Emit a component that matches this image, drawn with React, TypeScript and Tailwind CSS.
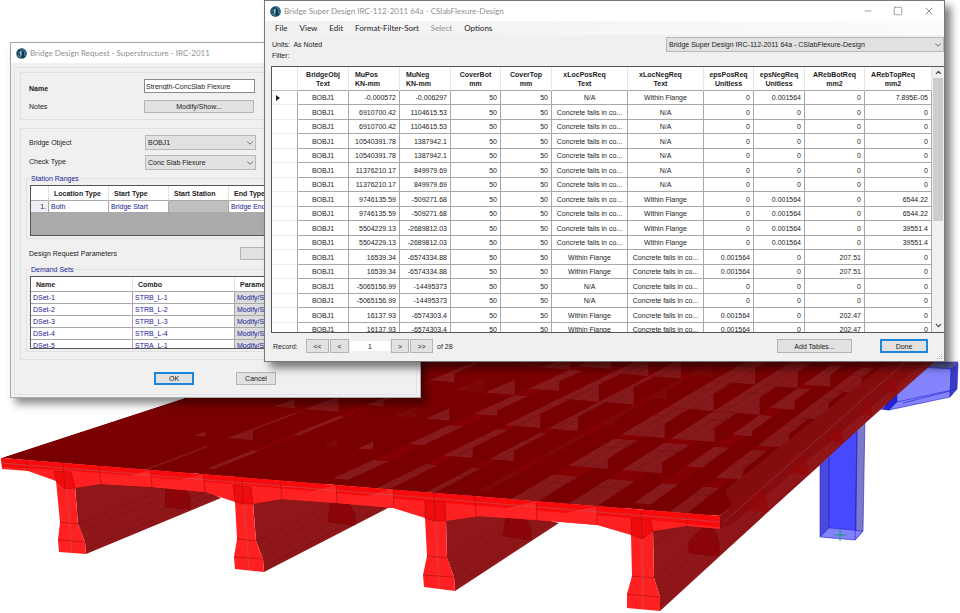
import type { ReactNode } from "react"
import { ChevronDown, ChevronUp, Minus, Square, X } from "lucide-react"

/** Results table */
type Row = [string, string, string, string, string, string, string, string, string, string, string]

const FAILS = "Concrete fails in co..."
const FLANGE = "Within Flange"

const rows: Row[] = [
  ["BOBJ1", "-0.000572", "-0.006297", "50", "50", "N/A", FLANGE, "0", "0.001564", "0", "7.895E-05"],
  ["BOBJ1", "6910700.42", "1104615.53", "50", "50", FAILS, "N/A", "0", "0", "0", "0"],
  ["BOBJ1", "6910700.42", "1104615.53", "50", "50", FAILS, "N/A", "0", "0", "0", "0"],
  ["BOBJ1", "10540391.78", "1387942.1", "50", "50", FAILS, "N/A", "0", "0", "0", "0"],
  ["BOBJ1", "10540391.78", "1387942.1", "50", "50", FAILS, "N/A", "0", "0", "0", "0"],
  ["BOBJ1", "11376210.17", "849979.69", "50", "50", FAILS, "N/A", "0", "0", "0", "0"],
  ["BOBJ1", "11376210.17", "849979.69", "50", "50", FAILS, "N/A", "0", "0", "0", "0"],
  ["BOBJ1", "9746135.59", "-509271.68", "50", "50", FAILS, FLANGE, "0", "0.001564", "0", "6544.22"],
  ["BOBJ1", "9746135.59", "-509271.68", "50", "50", FAILS, FLANGE, "0", "0.001564", "0", "6544.22"],
  ["BOBJ1", "5504229.13", "-2689812.03", "50", "50", FAILS, FLANGE, "0", "0.001564", "0", "39551.4"],
  ["BOBJ1", "5504229.13", "-2689812.03", "50", "50", FAILS, FLANGE, "0", "0.001564", "0", "39551.4"],
  ["BOBJ1", "16539.34", "-6574334.88", "50", "50", FLANGE, FAILS, "0.001564", "0", "207.51", "0"],
  ["BOBJ1", "16539.34", "-6574334.88", "50", "50", FLANGE, FAILS, "0.001564", "0", "207.51", "0"],
  ["BOBJ1", "-5065156.99", "-14495373", "50", "50", "N/A", FAILS, "0", "0", "0", "0"],
  ["BOBJ1", "-5065156.99", "-14495373", "50", "50", "N/A", FAILS, "0", "0", "0", "0"],
  ["BOBJ1", "16137.93", "-6574303.4", "50", "50", FLANGE, FAILS, "0.001564", "0", "202.47", "0"],
  ["BOBJ1", "16137.93", "-6574303.4", "50", "50", FLANGE, FAILS, "0.001564", "0", "202.47", "0"],
]

const columns = [
  { name: "BridgeObj", unit: "Text", col: "w-[51px]", head: "text-center", cell: "text-center" },
  { name: "MuPos", unit: "KN-mm", col: "w-[51px]", head: "pl-[6px] text-left", cell: "pr-[3px] text-right" },
  { name: "MuNeg", unit: "KN-mm", col: "w-[51px]", head: "pl-[6px] text-left", cell: "pr-[3px] text-right" },
  { name: "CoverBot", unit: "mm", col: "w-[50px]", head: "text-center", cell: "pr-[3px] text-right" },
  { name: "CoverTop", unit: "mm", col: "w-[51px]", head: "text-center", cell: "pr-[3px] text-right" },
  { name: "xLocPosReq", unit: "Text", col: "w-[76px]", head: "pr-[10px] text-center", cell: "text-center" },
  { name: "xLocNegReq", unit: "Text", col: "w-[76px]", head: "pr-[10px] text-center", cell: "text-center" },
  { name: "epsPosReq", unit: "Unitless", col: "w-[50px]", head: "text-center", cell: "pr-[3px] text-right" },
  { name: "epsNegReq", unit: "Unitless", col: "w-[51px]", head: "text-center", cell: "pr-[3px] text-right" },
  { name: "ARebBotReq", unit: "mm2", col: "w-[60px]", head: "text-center", cell: "pr-[3px] text-right" },
  { name: "ARebTopReq", unit: "mm2", col: "w-[67px]", head: "pr-[10px] text-center", cell: "pr-[3px] text-right" },
]

const demandSets = [
  ["DSet-1", "STRB_L-1"],
  ["DSet-2", "STRB_L-2"],
  ["DSet-3", "STRB_L-3"],
  ["DSet-4", "STRB_L-4"],
  ["DSet-5", "STRA_L-1"],
]

const menus = ["File", "View", "Edit", "Format-Filter-Sort", "Select", "Options"]

/** Bridge model, drawn towards a single vanishing point */
type Pt = [number, number]

const VP: Pt = [1305, 33]

// u runs along the front edge of the deck, t goes back to the vanishing point
function deck(u: number, t: number, drop = 0): Pt {
  const x = 1 + 719 * u
  const y = 458 + 58 * u
  return [x + (VP[0] - x) * t, y + (VP[1] - y) * t + drop * (1 - t)]
}

function toVP([x, y]: Pt, t: number): Pt {
  return [x + (VP[0] - x) * t, y + (VP[1] - y) * t]
}

const pts = (list: Pt[]) => list.map(([x, y]) => `${x.toFixed(1)},${y.toFixed(1)}`).join(" ")

const FAR = 0.335
const rowsT = [0, 0.091, 0.165, 0.229, 0.283, 0.33]
const webs = [0.028, 0.079, 0.131, 0.204, 0.279, 0.334, 0.388, 0.468, 0.54, 0.603, 0.663, 0.747, 0.83, 0.893, 0.954]
const DROP = 22

const frontFace: Pt[] = [
  [1, 458], [720, 516], [720, 529], [687, 526], [653, 531], [654, 578], [660, 597], [660, 611], [627, 608], [627, 594],
  [632, 576], [631, 535], [597, 525], [537, 520], [480, 516], [446, 521], [447, 558], [454, 577], [455, 591], [424, 587],
  [423, 575], [427, 556], [425, 518], [393, 508], [337, 503], [282, 499], [253, 504], [256, 541], [263, 559], [264, 572],
  [235, 569], [234, 557], [237, 539], [235, 502], [205, 492], [152, 487], [101, 484], [75, 488], [78, 524], [85, 542],
  [86, 554], [59, 552], [58, 540], [60, 522], [56, 481], [28, 471], [2, 469],
]

const girderSides: Pt[][] = [
  [[75, 486], [101, 482], [205, 490], [221, 498], [86, 554], [85, 542], [78, 524]],
  [[253, 502], [282, 497], [393, 506], [388, 508], [264, 572], [263, 559], [256, 541]],
  [[446, 519], [480, 514], [537, 518], [559, 523], [455, 591], [454, 577], [447, 558]],
  [[653, 529], [687, 524], [720, 516], [905, 362], [934, 362], [863, 425], [820, 465], [768, 512], [720, 556], [660, 611], [660, 597], [654, 578]],
]

// flange corners of each girder end, the long edges start here
const girderEdges: { from: Pt; reach: number }[] = [
  { from: [78, 524], reach: 0.13 }, { from: [81, 531], reach: 0.12 }, { from: [85, 542], reach: 0.11 }, { from: [86, 549], reach: 0.11 },
  { from: [256, 541], reach: 0.14 }, { from: [259, 549], reach: 0.13 }, { from: [263, 559], reach: 0.12 }, { from: [264, 567], reach: 0.12 },
  { from: [447, 558], reach: 0.14 }, { from: [450, 566], reach: 0.13 }, { from: [454, 577], reach: 0.12 }, { from: [455, 585], reach: 0.12 },
  { from: [653, 545], reach: 0.42 }, { from: [654, 578], reach: 0.42 }, { from: [657, 587], reach: 0.42 }, { from: [660, 597], reach: 0.42 }, { from: [660, 605], reach: 0.42 },
]

const diaphragmEnds: Pt[][] = [
  [[166, 486], [186, 489], [190, 498], [190, 509], [165, 507]],
  [[331, 503], [350, 505], [355, 514], [355, 525], [328, 522]],
  [[506, 518], [527, 520], [531, 530], [531, 540], [503, 536]],
  [[702, 528], [714, 529], [719, 542], [719, 556], [689, 553], [689, 541]],
]

const farDiaphragmEnds: Pt[][] = [
  [[763, 488], [768, 502], [768, 512], [742, 510], [752, 498]],
  [[803, 456], [808, 466], [808, 475], [788, 473], [796, 463]],
  [[838, 425], [843, 434], [843, 443], [826, 441], [833, 432]],
  [[868, 399], [872, 408], [872, 416], [858, 414], [863, 405]],
  [[893, 377], [897, 384], [897, 393], [884, 390], [889, 382]],
]

const joints: Pt[][] = [
  [[27, 460], [28, 471]], [[63, 463], [65, 489]], [[99, 466], [101, 484]], [[150, 470], [152, 487]], [[203, 474], [205, 492]],
  [[242, 477], [243, 504]], [[280, 480], [282, 499]], [[336, 485], [337, 503]], [[393, 489], [394, 508]], [[434, 493], [435, 521]],
  [[475, 496], [476, 516]], [[536, 501], [537, 520]], [[597, 506], [597, 525]], [[641, 510], [642, 539]], [[686, 513], [687, 526]],
]

const girderJoints: Pt[][] = [
  [[60, 522], [78, 524]], [[58, 540], [85, 542]], [[237, 539], [256, 541]], [[234, 557], [263, 559]],
  [[427, 556], [447, 558]], [[423, 575], [454, 577]], [[632, 576], [654, 578]], [[627, 594], [660, 597]],
]

function BridgeDeck() {
  const bays = rowsT.slice(1).map((t, i) => ({ t, prev: rowsT[i] }))
  return (
    <g>
      <clipPath id="deck-clip">
        <polygon points={pts([deck(0, 0), deck(1, 0), deck(1, FAR), deck(0, FAR)])} />
      </clipPath>
      <g clipPath="url(#deck-clip)">
        <polygon points={pts([deck(0, 0), deck(1, 0), deck(1, FAR), deck(0, FAR)])} fill="#7b0000" />
        {bays.map(({ t, prev }) => (
          <g key={t}>
            {/* bottom flanges seen through the deck, then the reinforcement on them */}
            {webs.slice(0, -1).map((u, i) => {
              const near = Math.max(prev, t - (i % 3 === 0 ? 0.04 : 0.056))
              const mid = t - 0.016
              return (
                <g key={u}>
                  <polygon fill={i % 5 === 4 ? "#7c0808" : "#86191b"}
                    points={pts([deck(u, t, DROP), deck(webs[i + 1], t, DROP), deck(webs[i + 1], near, DROP), deck(u, near, DROP)])} />
                  {i % 3 !== 0 && (
                    <g stroke="#5a0a0c" strokeWidth="0.4" opacity="0.7">
                      <polyline points={pts([deck(u, mid, DROP), deck(webs[i + 1], mid, DROP)])} />
                      <polyline points={pts([deck(u + 0.02, t, DROP), deck(u + 0.02, near, DROP)])} />
                      <polyline points={pts([deck(u + 0.035, t, DROP), deck(u + 0.045, near, DROP)])} />
                    </g>
                  )}
                </g>
              )
            })}
            <polygon points={pts([deck(0.028, t), deck(0.954, t), deck(0.954, t, DROP), deck(0.028, t, DROP)])} fill="#840002" />
            {webs.map((u) => (
              <polygon key={u} fill="#790000"
                points={pts([deck(u, prev), deck(u, t), deck(u, t, DROP), deck(u, prev, DROP)])} />
            ))}
            <polyline points={pts([deck(0.028, t), deck(0.954, t)])} stroke="#8c0406" strokeWidth="0.5" opacity="0.7" />
            <polyline points={pts([deck(0.45, t, 5), deck(0.954, t, 5)])} stroke="#5c0000" strokeWidth="0.4" opacity="0.5" />
          </g>
        ))}
        {/* right cantilever */}
        <polygon points={pts([deck(0.965, 0.05), deck(1, 0.02), deck(1, FAR), deck(0.965, FAR)])} fill="#830c0d" />
        {[0.6, 0.68, 0.76, 0.85, 0.9].map((u) => (
          <polyline key={u} points={pts([deck(u, 0), deck(u, FAR)])} stroke="#500000" strokeWidth="0.4" opacity="0.4" />
        ))}
      </g>
    </g>
  )
}

function BridgePier() {
  return (
    <g stroke="#2424cc" strokeWidth="0.6" strokeLinejoin="round">
      <polygon points="820,465 829,457 829,528 820,537" fill="#4a4adf" />
      <polygon points="829,457 857,425 856,530 829,528" fill="#4848ff" />
      <polygon points="857,425 865,415 863,531 855,540 856,530" fill="#7a7ac8" />
      <polygon points="820,537 829,528 863,531 855,540" fill="#8282ff" />
      <path d="M857 432 855 540" fill="none" />
      <path d="M834 535h12M840 529v12" stroke="#189a78" strokeWidth="1" />
      <polygon points="925,367 932,362 958,362 951,369" fill="#5c5c9c" />
      <polygon points="920,367 951,369 950,397 889,410 880,409 890,390" fill="#8484ff" />
      <polygon points="951,369 958,363 957,389 950,397" fill="#3b3bc2" />
      <polygon points="888,402 897,394 897,402 889,410 883,409" fill="#2222d2" />
      <path d="M897 402 957 389M903 403 950 391" fill="none" />
    </g>
  )
}

function BridgeModel() {
  return (
    <svg viewBox="0 0 960 613" className="block h-auto w-full" fill="none" role="img" aria-label="3D bridge model">
      <BridgePier />
      {girderSides.map((side, i) => <polygon key={i} points={pts(side)} fill="#8f171a" />)}
      {girderEdges.map(({ from, reach }, i) => (
        <polyline key={i} points={pts([from, toVP(from, reach)])} stroke="#6a0b0d" strokeWidth="0.5" opacity="0.6" />
      ))}
      {diaphragmEnds.map((end, i) => (
        <polygon key={i} points={pts(end)} fill="#8c0206" stroke="#6a0005" strokeWidth="0.5" opacity="0.85" />
      ))}
      <BridgeDeck />
      <polygon points={pts([[720, 516], [720, 529], [732, 524], [925, 362], [900, 362]])} fill="#850d0f" />
      <path d="M724 522 905 362" stroke="#a86a6a" strokeWidth="0.6" opacity="0.6" />
      {farDiaphragmEnds.map((end, i) => (
        <polygon key={i} points={pts(end)} fill="#94070a" opacity="0.8" />
      ))}
      <polygon points={pts(frontFace)} fill="#ff2122" />
      <polygon points="1,458 720,516 720,527 641,519 434,502 242,485 63,470 2,467" fill="#f80b0c" />
      {/* lit faces between the haunches */}
      <g fill="#ff2324">
        <polygon points="101,484 150,470 152,487" />
        <polygon points="152,487 203,474 205,492" />
        <polygon points="282,499 336,485 337,503" />
        <polygon points="337,503 393,489 394,508" />
        <polygon points="476,516 536,501 537,520" />
        <polygon points="537,520 597,506 597,525" />
      </g>
      {/* girder tops inside the slab */}
      <g fill="#f00c0d" stroke="#a80a0c" strokeWidth="0.5">
        <polygon points="54,471 71,472 75,488 65,489 56,481" />
        <polygon points="233,485 251,487 253,504 243,504 235,502" />
        <polygon points="425,501 445,502 446,521 435,521 425,518" />
        <polygon points="631,518 651,520 653,531 642,539 631,535" />
      </g>
      <g stroke="#a00d10" strokeWidth="0.6">
        {[...joints, ...girderJoints].map((line, i) => <polyline key={i} points={pts(line)} />)}
      </g>
      <path d="M1 463 720 522M67 489 72 553M244 504 249 570M436 521 439 589M642 539 643 609" stroke="#b8595b" strokeWidth="0.6" />
    </svg>
  )
}

function AppIcon() {
  return (
    <svg viewBox="0 0 22 22" className="size-[11px] shrink-0" aria-hidden="true">
      <circle cx="11" cy="11" r="10.5" fill="#1d4a63" />
      <path d="M11 .5a10.500 10.500 0 0 1 8 17L11 11Z" fill="#2f7190" />
      <path d="M3 11 11 5v11l-3-2v-5Z" fill="#9dbccb" />
      <path d="M12 3l4 5v10l-4 1Z" fill="#143448" />
      <path d="M3 13l6 4 3 3-6-2Z" fill="#6b9db3" />
    </svg>
  )
}

function TitleBar({ title, children }: { title: string; children?: ReactNode }) {
  return (
    <header className="flex h-5 items-center gap-[3px] bg-white pl-[5px] font-[Lato,sans-serif] text-[8px] text-[#8f8f8f]">
      <AppIcon />
      <h2 className="whitespace-nowrap">{title}</h2>
      {children}
    </header>
  )
}

function Button({ children, className = "", primary = false, label }: {
  children?: ReactNode
  className?: string
  primary?: boolean
  label?: string
}) {
  return (
    <button type="button" aria-label={label}
      className={`flex shrink-0 items-center justify-center bg-[#e1e1e1] leading-[9px]
        ${primary ? "border-2 border-[#1a86dc]" : "border border-[#b4b4b4]"} ${className}`}>
      {children}
    </button>
  )
}

function Select({ id, value, label, className }: { id: string; value: string; label?: string; className: string }) {
  return (
    <div className={`relative h-[15px] ${className}`}>
      <select id={id} aria-label={label}
        className="block h-full w-full appearance-none border border-[#b8b8b8] bg-[#e1e1e1] pl-[2px] text-[7px] leading-[9px]">
        <option>{value}</option>
      </select>
      <ChevronDown className="pointer-events-none absolute top-[3px] right-px size-[10px] text-[#555]" strokeWidth={2} />
    </div>
  )
}

function DesignRequestWindow() {
  const th = "border-r border-b border-r-[#e2e2e2] border-b-[#a8a8a8] pl-[5px] text-left"
  const td = "border-r border-b border-[#a8a8a8] pl-[2px]"
  return (
    <section className="absolute top-[42px] left-[10px] w-[411px] border border-[#a9a9a9] bg-[#f0f0f0] shadow-[5px_6px_8px_rgba(0,0,0,0.45)]">
      <TitleBar title="Bridge Design Request - Superstructure - IRC-2011" />
      <form className="mx-[3px] mt-1 mb-[2px] border border-[#e3e3e3] px-[5px] pt-1 pb-[9px]">
        <div className="border border-[#e0e0e0] px-2 py-[6px]">
          <div className="flex h-[14px] items-center">
            <label htmlFor="req-name" className="w-[115px] pt-[4px] font-bold">Name</label>
            <input id="req-name" defaultValue="Strength-ConcSlab Flexure"
              className="h-[14px] w-[111px] border border-[#8a8a8a] bg-white pl-[1px] leading-[9px]" />
          </div>
          <div className="mt-[7px] flex h-[13px] items-center">
            <span className="w-[115px]">Notes</span>
            <Button className="h-[13px] w-[110px]">Modify/Show...</Button>
          </div>
        </div>

        <div className="mt-2 border border-[#e0e0e0] pt-[6px] pb-[7px]">
          <div className="flex items-center pl-2">
            <label htmlFor="bridge-object" className="w-[116px]">Bridge Object</label>
            <Select id="bridge-object" value="BOBJ1" className="w-[111px]" />
          </div>
          <div className="mt-[5px] flex items-center pl-2">
            <label htmlFor="check-type" className="w-[116px] pb-[3px]">Check Type</label>
            <Select id="check-type" value="Conc Slab Flexure" className="w-[111px]" />
          </div>

          <fieldset className="mx-[5px] mt-[4px] border border-[#e0e0e0] px-[3px] pt-[2px] pb-[2px]">
            <legend className="h-[9px] px-px text-[#22229a]">Station Ranges</legend>
            <div className="h-[51px] overflow-hidden border border-[#555] bg-[#ababab]">
              <table className="w-full table-fixed border-separate border-spacing-0">
                <colgroup>
                  <col className="w-[18px]" />
                  <col className="w-[60px]" />
                  <col className="w-[60px]" />
                  <col className="w-[60px]" />
                  <col />
                </colgroup>
                <thead className="bg-white">
                  <tr className="h-[15px]">
                    <th className={th} aria-label="Row" />
                    <th className={th}>Location Type</th>
                    <th className={th}>Start Type</th>
                    <th className={th}>Start Station</th>
                    <th className={th}>End Type</th>
                  </tr>
                </thead>
                <tbody className="bg-white text-[#22229a]">
                  <tr className="h-3">
                    <td className={`${td} bg-[#f0f0f0] pr-[2px] text-right`}>1.</td>
                    <td className={td}>Both</td>
                    <td className={td}>Bridge Start</td>
                    <td className={`${td} bg-[#c0c0c0]`} />
                    <td className={td}>Bridge End</td>
                  </tr>
                </tbody>
              </table>
            </div>
          </fieldset>

          <div className="mt-[8px] flex h-[13px] items-center pl-2">
            <span className="w-[211px]">Design Request Parameters</span>
            <Button className="h-[13px] w-[110px]" label="Modify design request parameters" />
          </div>

          <fieldset className="mx-[5px] mt-[5px] border border-[#e0e0e0] px-[3px] pt-[2px] pb-[2px]">
            <legend className="h-[9px] px-px text-[#22229a]">Demand Sets</legend>
            <div className="h-[73px] overflow-hidden border border-[#555] bg-white">
              <table className="w-full table-fixed border-separate border-spacing-0">
                <colgroup>
                  <col className="w-[102px]" />
                  <col className="w-[102px]" />
                  <col />
                </colgroup>
                <thead>
                  <tr className="h-[15px]">
                    <th className={th}>Name</th>
                    <th className={th}>Combo</th>
                    <th className={th}>Parameters</th>
                  </tr>
                </thead>
                <tbody className="text-[#22229a]">
                  {demandSets.map(([name, combo]) => (
                    <tr key={name} className="h-3">
                      <td className={td}>{name}</td>
                      <td className={td}>{combo}</td>
                      <td className={`${td} bg-[#dcdcdc]`}>Modify/Show...</td>
                    </tr>
                  ))}
                </tbody>
              </table>
            </div>
          </fieldset>
        </div>

        <div className="mt-3 flex gap-[42px] pl-[134px]">
          <Button primary className="h-[13px] w-[40px]">OK</Button>
          <Button className="h-[13px] w-[40px]">Cancel</Button>
        </div>
      </form>
    </section>
  )
}

function ResultsTable() {
  return (
    <div className="ml-[6px] flex h-[267px] border-y border-l border-[#555] bg-white">
      <div className="min-w-0 flex-1 overflow-hidden">
        <table className="w-full table-fixed border-separate border-spacing-0">
          <colgroup>
            <col className="w-[26px]" />
            {columns.map((c) => <col key={c.name} className={c.col} />)}
          </colgroup>
          <thead>
            <tr className="h-6">
              <th className="border-r border-b border-r-[#e6e6e6] border-b-[#c4c4c4]" aria-label="Current record" />
              {columns.map((c) => (
                <th key={c.name} className={`border-r border-b border-r-[#e6e6e6] border-b-[#a8a8a8] leading-[9px] ${c.head}`}>
                  {c.name}<br />{c.unit}
                </th>
              ))}
            </tr>
          </thead>
          <tbody>
            {rows.map((row, i) => (
              <tr key={i} className="h-[15px] odd:h-[14px]">
                <td className="border-r border-b border-r-[#a8a8a8] border-b-[#ececec] pl-[4px]">
                  {i === 0 && (
                    <svg viewBox="0 0 4 6" className="h-[6px] w-[4px]" aria-hidden="true"><path d="M0 0 4 3 0 6Z" fill="#222" /></svg>
                  )}
                </td>
                {row.map((value, j) => (
                  <td key={j} className={`border-r border-b border-[#a8a8a8] whitespace-nowrap ${columns[j].cell}`}>{value}</td>
                ))}
              </tr>
            ))}
          </tbody>
        </table>
      </div>

      {/* Scrollbar */}
      <div className="flex w-3 shrink-0 flex-col items-center bg-[#f0f0f0] text-[#444]">
        <ChevronUp className="my-px size-[9px] shrink-0" strokeWidth={3} />
        <div className="h-[143px] w-[10px] bg-[#cdcdcd]" />
        <ChevronDown className="mt-auto mb-[2px] size-[9px] shrink-0" strokeWidth={3} />
      </div>
    </div>
  )
}

function ResultsWindow() {
  return (
    <section className="absolute top-0 right-[15px] left-[264px] min-w-[600px] border border-[#777] bg-[#f0f0f0] shadow-[6px_6px_8px_rgba(0,0,0,0.5)]">
      <TitleBar title="Bridge Super Design IRC-112-2011 64a - CSlabFlexure-Design">
        <div className="ml-auto flex items-center gap-5 pr-[9px]">
          <button type="button" aria-label="Minimize"><Minus className="size-[10px]" strokeWidth={2} /></button>
          <button type="button" aria-label="Maximize"><Square className="size-[10px]" strokeWidth={2} /></button>
          <button type="button" aria-label="Close"><X className="size-[12px]" strokeWidth={2} /></button>
        </div>
      </TitleBar>

      <nav className="flex h-[14px] items-center gap-3 bg-gradient-to-r from-[#f1f1f1] to-[#fbfbfb] pl-[10px] font-[Lato,sans-serif] text-[8px]">
        {menus.map((m) => (
          <button key={m} type="button" className={m === "Select" ? "text-[#8f8f8f]" : ""}>{m}</button>
        ))}
      </nav>

      <div className="flex h-[31px] items-start justify-between pl-[7px]">
        <div className="pt-[4px] leading-[11px]">
          <p>Units:&nbsp; As Noted</p>
          <p>Filter:</p>
        </div>
        <div className="w-[278px] pt-[2px]">
          <Select id="result-table" label="Table" value="Bridge Super Design IRC-112-2011 64a - CSlabFlexure-Design" className="w-full" />
        </div>
      </div>

      <ResultsTable />

      <footer className="flex items-center pt-[6px] pr-[16px] pb-2 pl-2">
        <label htmlFor="record" className="w-[33px]">Record:</label>
        <Button className="h-[14px] w-[23px]" label="First record">&lt;&lt;</Button>
        <Button className="ml-px h-[14px] w-[19px]" label="Previous record">&lt;</Button>
        <input id="record" defaultValue="1" className="mx-[1px] h-[10px] w-[40px] bg-white text-center leading-[9px]" />
        <Button className="h-[14px] w-[18px]" label="Next record">&gt;</Button>
        <Button className="ml-px h-[14px] w-[23px]" label="Last record">&gt;&gt;</Button>
        <span className="ml-1">of 28</span>
        <Button className="mr-7 ml-auto h-[14px] w-[75px]">Add Tables...</Button>
        <Button primary className="h-[14px] w-[48px]">Done</Button>
      </footer>

      {/* Resize grip */}
      <svg viewBox="0 0 6 6" className="absolute right-[1px] bottom-[1px] size-[6px]" fill="#b5b5b5" aria-hidden="true">
        <path d="M4 0h1v1H4zM2 2h1v1H2zM4 2h1v1H4zM0 4h1v1H0zM2 4h1v1H2zM4 4h1v1H4z" />
      </svg>
    </section>
  )
}

export default function App() {
  return (
    <main className="relative min-h-screen overflow-hidden bg-white font-['Liberation_Sans',sans-serif] text-[7px] leading-[9px] text-[#1c1c1c]">
      <BridgeModel />
      <DesignRequestWindow />
      <ResultsWindow />
    </main>
  )
}
